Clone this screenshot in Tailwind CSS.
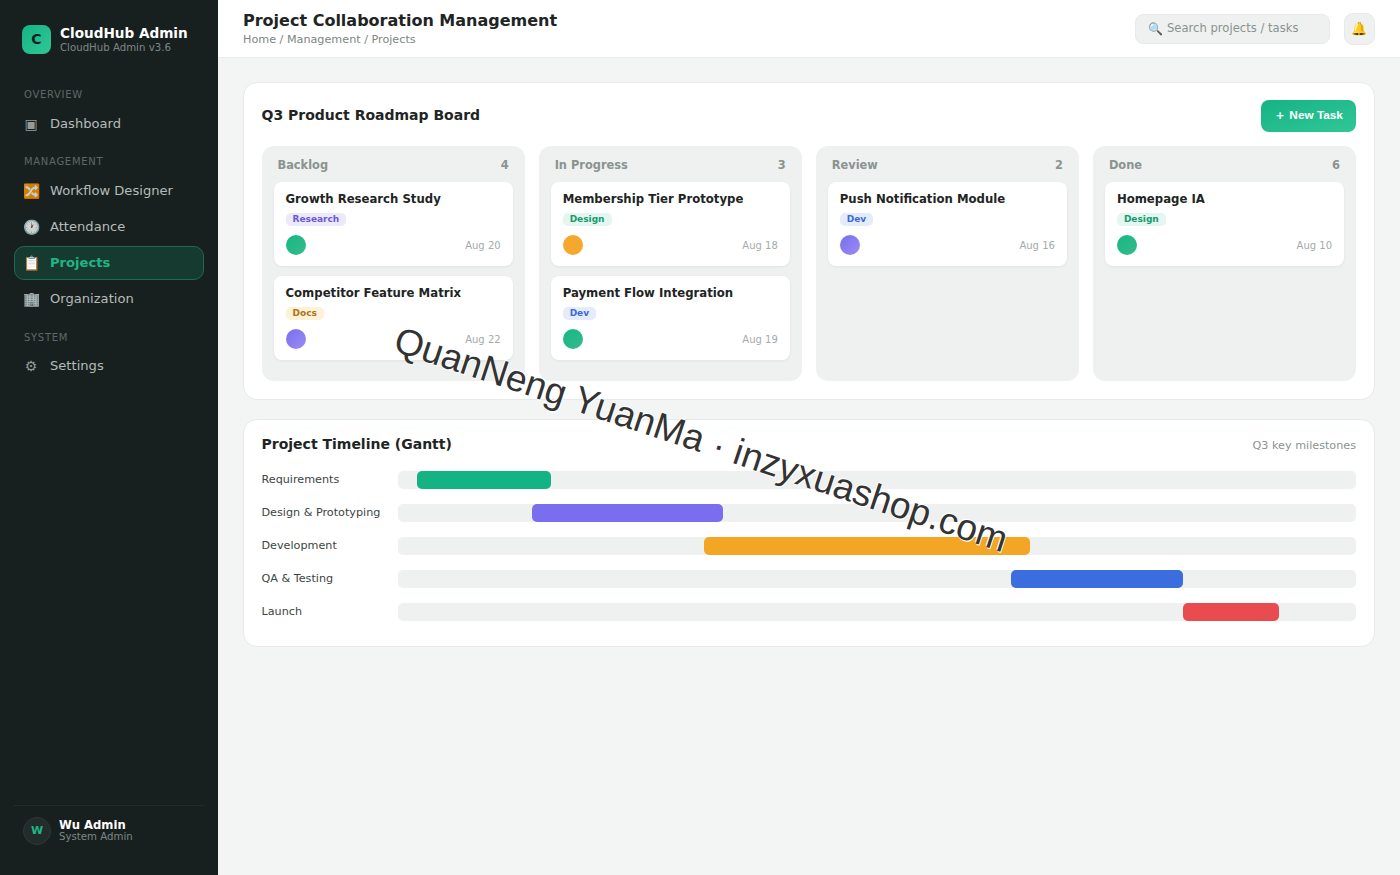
<!DOCTYPE html>
<html lang="en">
<head>
    <meta charset="UTF-8">
    <title>Project Collaboration Management</title>
    <script src="https://cdn.jsdelivr.net/npm/@tailwindcss/browser@4"></script>
</head>
<body class="bg-[#f3f5f4] font-['DejaVu_Sans','Noto_Color_Emoji',sans-serif] text-[#1e2524]">
<div class="relative flex h-[875px] w-[1400px] overflow-hidden">
    <!-- Sidebar -->
    <aside class="flex w-[218px] shrink-0 flex-col bg-[#18201f] px-[14px]">
        <div class="flex items-center gap-[9px] pl-[8px] pt-[25px]">
            <div class="flex h-[29px] w-[29px] items-center justify-center rounded-[8px] bg-gradient-to-br from-[#14b386] to-[#2fc795] text-[14px] font-bold text-[#18201f]">C</div>
            <div>
                <div class="text-[13.6px] leading-[16px] font-bold text-white">CloudHub Admin</div>
                <div class="text-[10.2px] leading-[13px] text-[#7d8684]">CloudHub Admin v3.6</div>
            </div>
        </div>

        <div class="mt-[34px] pl-[10px] text-[10px] leading-[13px] tracking-[0.7px] text-[#5f6866]">OVERVIEW</div>
        <a class="mt-[6px] flex h-[34px] items-center gap-[11px] pl-[9px] text-[13.1px] text-[#b4bbb9]"><span class="w-[16px] text-center text-[14px] opacity-80">▣</span>Dashboard</a>

        <div class="mt-[14px] pl-[10px] text-[10px] leading-[13px] tracking-[0.7px] text-[#5f6866]">MANAGEMENT</div>
        <a class="mt-[6px] flex h-[34px] items-center gap-[11px] pl-[9px] text-[13.1px] text-[#b4bbb9]"><span class="w-[16px] text-center text-[14px] opacity-80">🔀</span>Workflow Designer</a>
        <a class="mt-[2px] flex h-[34px] items-center gap-[11px] pl-[9px] text-[13.1px] text-[#b4bbb9]"><span class="w-[16px] text-center text-[14px] opacity-80">🕐</span>Attendance</a>
        <a class="mt-[2px] flex h-[34px] items-center gap-[11px] rounded-[10px] border border-[#1d6a50] bg-[#173a30] pl-[8px] text-[13.1px] font-bold text-[#1fb585]"><span class="w-[16px] text-center text-[14px] font-normal">📋</span>Projects</a>
        <a class="mt-[2px] flex h-[34px] items-center gap-[11px] pl-[9px] text-[13.1px] text-[#b4bbb9]"><span class="w-[16px] text-center text-[14px] opacity-80">🏢</span>Organization</a>

        <div class="mt-[15px] pl-[10px] text-[10px] leading-[13px] tracking-[0.7px] text-[#5f6866]">SYSTEM</div>
        <a class="mt-[5px] flex h-[34px] items-center gap-[11px] pl-[9px] text-[13.1px] text-[#b4bbb9]"><span class="w-[16px] text-center text-[14px] opacity-80">⚙</span>Settings</a>

        <div class="mt-auto mb-[30px] flex items-center gap-[8px] border-t border-[#232c2a] pl-[9px] pt-[11px]">
            <div class="flex h-[28px] w-[28px] items-center justify-center rounded-full border border-[#2e3836] bg-[#222c2a] text-[11px] font-bold text-[#1fb585]">W</div>
            <div>
                <div class="text-[11.6px] leading-[12px] font-bold text-white">Wu Admin</div>
                <div class="text-[10.2px] leading-[12px] text-[#7d8684]">System Admin</div>
            </div>
        </div>
    </aside>

    <!-- Main -->
    <div class="flex min-w-0 flex-1 flex-col">
        <header class="flex h-[58px] items-center justify-between border-b border-[#e9edeb] bg-white pl-[25px] pr-[25px]">
            <div>
                <h1 class="text-[16px] leading-[21px] font-bold">Project Collaboration Management</h1>
                <div class="mt-[1px] text-[11.2px] leading-[15px] text-[#7d8684]">Home / Management / Projects</div>
            </div>
            <div class="flex items-center gap-[14px]">
                <div class="flex h-[30px] w-[195px] items-center gap-[4px] rounded-[8px] border border-[#e6eae8] bg-[#eef1ef] pl-[12px] pt-[1px] text-[11.6px] text-[#8b9391]"><span class="text-[12px]">🔍</span>Search projects / tasks</div>
                <div class="flex h-[32px] w-[31px] items-center justify-center rounded-[9px] border border-[#e6eae8] bg-[#eef1ef] text-[13px]">🔔</div>
            </div>
        </header>

        <main class="flex flex-col gap-[19px] pl-[25px] pr-[25px] pt-[24px]">
            <!-- Board -->
            <section class="h-[318px] rounded-[14px] border border-[#e6eae8] bg-white pl-[17.5px] pr-[18px] pt-[17px]">
                <div class="flex h-[32px] items-center justify-between">
                    <h2 class="pb-[1px] text-[14px] font-bold">Q3 Product Roadmap Board</h2>
                    <button class="h-[32px] w-[95px] rounded-[8px] bg-gradient-to-br from-[#14b386] to-[#2fc795] font-['Liberation_Sans',sans-serif] text-[11.8px] font-bold text-white">＋ New Task</button>
                </div>
                <div class="mt-[14px] grid h-[235px] grid-cols-4 gap-[14px]">
                    <!-- Backlog -->
                    <div class="rounded-[12px] bg-[#eef1ef] px-[12px]">
                        <div class="flex h-[36px] items-center justify-between px-[4px] pt-[3px] text-[11.4px] font-bold text-[#8b9391]"><span>Backlog</span><span>4</span></div>
                        <div class="flex flex-col gap-[10px]">
                            <div class="h-[84px] rounded-[8px] bg-white px-[12px] pt-[10px] shadow-[0_1px_3px_rgba(0,0,0,0.06)]">
                                <div class="text-[11.7px] leading-[15px] font-bold">Growth Research Study</div>
                                <span class="mt-[6px] block w-fit rounded-[5px] bg-[#ece9fb] px-[7px] text-[9px] leading-[13px] font-bold text-[#6a58d6]">Research</span>
                                <div class="mt-[9px] flex items-center justify-between"><span class="h-[20px] w-[20px] rounded-full bg-gradient-to-br from-[#10b981] to-[#34b98f]"></span><span class="text-[10px] text-[#a4abaa]">Aug 20</span></div>
                            </div>
                            <div class="h-[84px] rounded-[8px] bg-white px-[12px] pt-[10px] shadow-[0_1px_3px_rgba(0,0,0,0.06)]">
                                <div class="text-[11.7px] leading-[15px] font-bold">Competitor Feature Matrix</div>
                                <span class="mt-[6px] block w-fit rounded-[5px] bg-[#fdf1d8] px-[7px] text-[9px] leading-[13px] font-bold text-[#a9741a]">Docs</span>
                                <div class="mt-[9px] flex items-center justify-between"><span class="h-[20px] w-[20px] rounded-full bg-gradient-to-br from-[#7a6eee] to-[#9a8cf5]"></span><span class="text-[10px] text-[#a4abaa]">Aug 22</span></div>
                            </div>
                        </div>
                    </div>
                    <!-- In Progress -->
                    <div class="rounded-[12px] bg-[#eef1ef] px-[12px]">
                        <div class="flex h-[36px] items-center justify-between px-[4px] pt-[3px] text-[11.4px] font-bold text-[#8b9391]"><span>In Progress</span><span>3</span></div>
                        <div class="flex flex-col gap-[10px]">
                            <div class="h-[84px] rounded-[8px] bg-white px-[12px] pt-[10px] shadow-[0_1px_3px_rgba(0,0,0,0.06)]">
                                <div class="text-[11.7px] leading-[15px] font-bold">Membership Tier Prototype</div>
                                <span class="mt-[6px] block w-fit rounded-[5px] bg-[#e3f6ef] px-[7px] text-[9px] leading-[13px] font-bold text-[#169a70]">Design</span>
                                <div class="mt-[9px] flex items-center justify-between"><span class="h-[20px] w-[20px] rounded-full bg-[#f5a82e]"></span><span class="text-[10px] text-[#a4abaa]">Aug 18</span></div>
                            </div>
                            <div class="h-[84px] rounded-[8px] bg-white px-[12px] pt-[10px] shadow-[0_1px_3px_rgba(0,0,0,0.06)]">
                                <div class="text-[11.7px] leading-[15px] font-bold">Payment Flow Integration</div>
                                <span class="mt-[6px] block w-fit rounded-[5px] bg-[#e4ebfb] px-[7px] text-[9px] leading-[13px] font-bold text-[#3c68d8]">Dev</span>
                                <div class="mt-[9px] flex items-center justify-between"><span class="h-[20px] w-[20px] rounded-full bg-gradient-to-br from-[#10b981] to-[#34b98f]"></span><span class="text-[10px] text-[#a4abaa]">Aug 19</span></div>
                            </div>
                        </div>
                    </div>
                    <!-- Review -->
                    <div class="rounded-[12px] bg-[#eef1ef] px-[12px]">
                        <div class="flex h-[36px] items-center justify-between px-[4px] pt-[3px] text-[11.4px] font-bold text-[#8b9391]"><span>Review</span><span>2</span></div>
                        <div class="h-[84px] rounded-[8px] bg-white px-[12px] pt-[10px] shadow-[0_1px_3px_rgba(0,0,0,0.06)]">
                            <div class="text-[11.7px] leading-[15px] font-bold">Push Notification Module</div>
                            <span class="mt-[6px] block w-fit rounded-[5px] bg-[#e4ebfb] px-[7px] text-[9px] leading-[13px] font-bold text-[#3c68d8]">Dev</span>
                            <div class="mt-[9px] flex items-center justify-between"><span class="h-[20px] w-[20px] rounded-full bg-gradient-to-br from-[#7a6eee] to-[#9a8cf5]"></span><span class="text-[10px] text-[#a4abaa]">Aug 16</span></div>
                        </div>
                    </div>
                    <!-- Done -->
                    <div class="rounded-[12px] bg-[#eef1ef] px-[12px]">
                        <div class="flex h-[36px] items-center justify-between px-[4px] pt-[3px] text-[11.4px] font-bold text-[#8b9391]"><span>Done</span><span>6</span></div>
                        <div class="h-[84px] rounded-[8px] bg-white px-[12px] pt-[10px] shadow-[0_1px_3px_rgba(0,0,0,0.06)]">
                            <div class="text-[11.7px] leading-[15px] font-bold">Homepage IA</div>
                            <span class="mt-[6px] block w-fit rounded-[5px] bg-[#e3f6ef] px-[7px] text-[9px] leading-[13px] font-bold text-[#169a70]">Design</span>
                            <div class="mt-[9px] flex items-center justify-between"><span class="h-[20px] w-[20px] rounded-full bg-gradient-to-br from-[#10b981] to-[#34b98f]"></span><span class="text-[10px] text-[#a4abaa]">Aug 10</span></div>
                        </div>
                    </div>
                </div>
            </section>

            <!-- Gantt -->
            <section class="h-[228px] rounded-[14px] border border-[#e6eae8] bg-white pl-[17.5px] pr-[18px] pt-[14px]">
                <div class="flex h-[20px] items-center justify-between">
                    <h2 class="text-[14px] font-bold">Project Timeline (Gantt)</h2>
                    <span class="pt-[4px] text-[11.2px] text-[#8b9391]">Q3 key milestones</span>
                </div>
                <div class="mt-[17px] flex flex-col gap-[15px]">
                    <div class="flex items-center"><div class="w-[136px] shrink-0 text-[11.2px] text-[#3d4543]">Requirements</div><div class="h-[18px] flex-1 rounded-[5px] bg-[#eef1ef]"><div class="ml-[2%] h-full w-[14%] rounded-[5px] bg-[#14b386]"></div></div></div>
                    <div class="flex items-center"><div class="w-[136px] shrink-0 text-[11.2px] text-[#3d4543]">Design &amp; Prototyping</div><div class="h-[18px] flex-1 rounded-[5px] bg-[#eef1ef]"><div class="ml-[14%] h-full w-[20%] rounded-[5px] bg-[#7a6eee]"></div></div></div>
                    <div class="flex items-center"><div class="w-[136px] shrink-0 text-[11.2px] text-[#3d4543]">Development</div><div class="h-[18px] flex-1 rounded-[5px] bg-[#eef1ef]"><div class="ml-[32%] h-full w-[34%] rounded-[5px] bg-[#f3a524]"></div></div></div>
                    <div class="flex items-center"><div class="w-[136px] shrink-0 text-[11.2px] text-[#3d4543]">QA &amp; Testing</div><div class="h-[18px] flex-1 rounded-[5px] bg-[#eef1ef]"><div class="ml-[64%] h-full w-[18%] rounded-[5px] bg-[#3b6ddf]"></div></div></div>
                    <div class="flex items-center"><div class="w-[136px] shrink-0 text-[11.2px] text-[#3d4543]">Launch</div><div class="h-[18px] flex-1 rounded-[5px] bg-[#eef1ef]"><div class="ml-[82%] h-full w-[10%] rounded-[5px] bg-[#e84c4f]"></div></div></div>
                </div>
            </section>
        </main>
    </div>

    <!-- Overlay text across the page -->
    <div class="pointer-events-none absolute left-[402px] top-[320px] origin-top-left rotate-[18.3deg] whitespace-nowrap font-['Liberation_Sans',sans-serif] text-[37px] leading-[40px] text-[#333] [text-shadow:1px_1px_0_#fff,-1px_-1px_0_#fff]">QuanNeng YuanMa · inzyxuashop.com</div>
</div>
</body>
</html>
